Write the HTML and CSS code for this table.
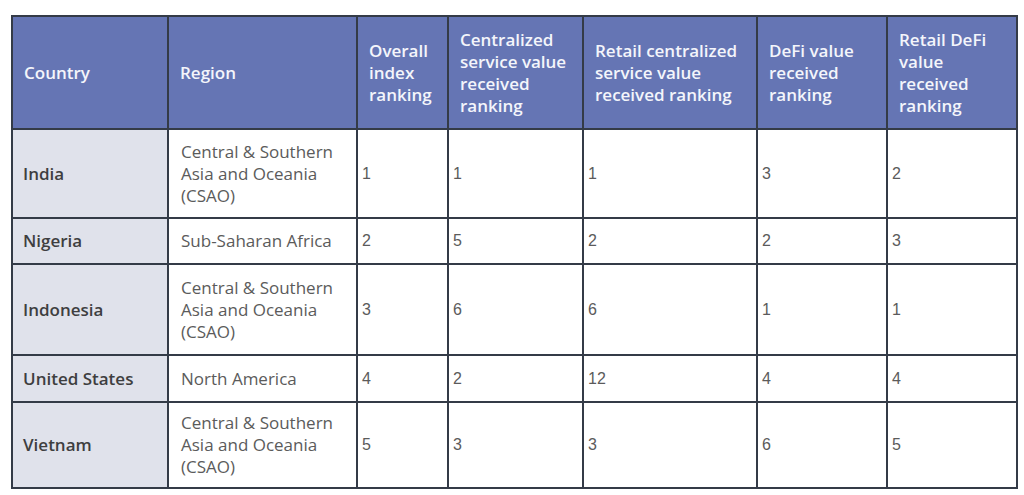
FILE: index.html
```html
<!DOCTYPE html>
<html lang="en">
<head>
<meta charset="utf-8">
<title>Crypto adoption ranking</title>
<link rel="stylesheet" href="styles.css">
</head>
<body>
<div class="page">
  <table class="rank">
    <colgroup>
      <col class="c-country">
      <col class="c-region">
      <col class="c-overall">
      <col class="c-central">
      <col class="c-retail">
      <col class="c-defi">
      <col class="c-rdefi">
    </colgroup>
    <thead>
      <tr class="head">
        <th>Country</th>
        <th>Region</th>
        <th>Overall index ranking</th>
        <th>Centralized service value received ranking</th>
        <th>Retail centralized service value received ranking</th>
        <th>DeFi value received ranking</th>
        <th>Retail DeFi value received ranking</th>
      </tr>
    </thead>
    <tbody>
      <tr class="r-tall">
        <td class="country">India</td>
        <td class="region">Central &amp; Southern Asia and Oceania (CSAO)</td>
        <td class="num">1</td><td class="num">1</td><td class="num">1</td><td class="num">3</td><td class="num">2</td>
      </tr>
      <tr class="r-short">
        <td class="country">Nigeria</td>
        <td class="region">Sub-Saharan Africa</td>
        <td class="num">2</td><td class="num">5</td><td class="num">2</td><td class="num">2</td><td class="num">3</td>
      </tr>
      <tr class="r-tall2">
        <td class="country">Indonesia</td>
        <td class="region">Central &amp; Southern Asia and Oceania (CSAO)</td>
        <td class="num">3</td><td class="num">6</td><td class="num">6</td><td class="num">1</td><td class="num">1</td>
      </tr>
      <tr class="r-short2">
        <td class="country">United States</td>
        <td class="region">North America</td>
        <td class="num">4</td><td class="num">2</td><td class="num">12</td><td class="num">4</td><td class="num">4</td>
      </tr>
      <tr class="r-tall3">
        <td class="country">Vietnam</td>
        <td class="region">Central &amp; Southern Asia and Oceania (CSAO)</td>
        <td class="num">5</td><td class="num">3</td><td class="num">3</td><td class="num">6</td><td class="num">5</td>
      </tr>
    </tbody>
  </table>
</div>
</body>
</html>
```
FILE: styles.css
```css
html, body {
  margin: 0;
  padding: 0;
  background: #ffffff;
}
.page {
  padding: 15px 0 0 11px;
}
.rank {
  border-collapse: collapse;
  table-layout: fixed;
  width: 1005px;
  font-family: "Open Sans", "Lato", sans-serif;
  font-size: 17px;
  line-height: 22px;
}
.c-country { width: 156px; }
.c-region { width: 189px; }
.c-overall { width: 91px; }
.c-central { width: 135px; }
.c-retail { width: 174px; }
.c-defi { width: 130px; }
.c-rdefi { width: 130px; }

.rank th, .rank td {
  border: 2px solid #343b47;
  vertical-align: middle;
  text-align: left;
}
.rank th {
  background: #6575b4;
  color: #f4f5fb;
  font-weight: 600;
  padding: 0 6px 0 11px;
}
.head { height: 113px; }
.r-tall { height: 89px; }
.r-short { height: 46px; }
.r-tall2 { height: 91px; }
.r-short2 { height: 47px; }
.r-tall3 { height: 86px; }

.rank td {
  color: #5b5b5b;
  background: #ffffff;
}
.country {
  background: #e0e2eb !important;
  color: #3e3e40 !important;
  font-weight: 600;
  padding: 0 6px 0 10px;
}
.region {
  padding: 0 6px 0 12px;
}
.num {
  font-family: "Liberation Sans", "DejaVu Sans", sans-serif;
  font-size: 16px;
  padding: 0 4px 0 4px;
}
```
